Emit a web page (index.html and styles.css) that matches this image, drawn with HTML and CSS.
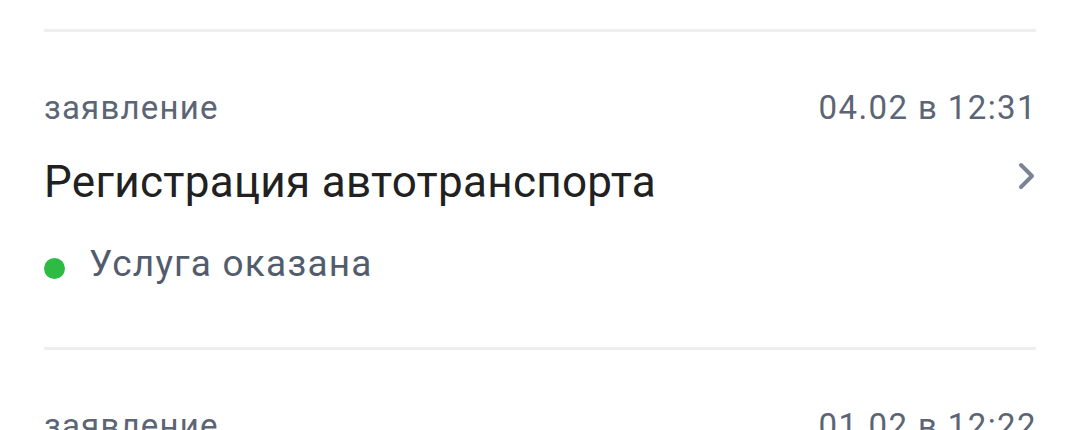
FILE: index.html
```html
<!DOCTYPE html>
<html lang="ru">
<head>
<meta charset="utf-8">
<link rel="stylesheet" href="styles.css">
</head>
<body>
<div class="list">
  <div class="divider"></div>
  <div class="item">
    <div class="meta">
      <span class="kind">заявление</span>
      <span class="date">04.02 в 12:31</span>
    </div>
    <div class="title-row">
      <span class="title">Регистрация автотранспорта</span>
      <svg class="chevron" width="20" height="30" viewBox="0 0 20 30"><polyline points="4,3 15,14 4,25" fill="none" stroke="#7b8496" stroke-width="4" stroke-linecap="round" stroke-linejoin="round"/></svg>
    </div>
    <div class="status">
      <span class="dot"></span>
      <span class="status-text">Услуга оказана</span>
    </div>
  </div>
  <div class="divider"></div>
  <div class="item">
    <div class="meta">
      <span class="kind">заявление</span>
      <span class="date">01.02 в 12:22</span>
    </div>
  </div>
</div>
</body>
</html>
```

FILE: styles.css
```css
html, body {
  margin: 0;
  padding: 0;
  background: #ffffff;
}
body {
  font-family: Roboto, "Noto Sans", sans-serif;
  overflow: hidden;
  height: 430px;
}
.list {
  padding: 29px 44px 0 44px;
  display: flex;
  flex-direction: column;
}
.divider {
  height: 3px;
  background: #eeeeee;
}
.item {
  display: flex;
  flex-direction: column;
  padding: 56px 0 61px 0;
}
.meta {
  display: flex;
  justify-content: space-between;
  align-items: baseline;
  font-size: 33px;
  line-height: 40px;
  color: #5b6576;
  letter-spacing: 1.2px;
}
.date {
  letter-spacing: 1.4px;
  margin-right: -1px;
}
.title-row {
  margin-top: 28px;
  display: flex;
  justify-content: space-between;
  align-items: center;
}
.title {
  font-size: 44px;
  line-height: 52px;
  color: #212121;
  letter-spacing: 0.3px;
}
.chevron {
  margin-bottom: 11px;
  margin-right: -1px;
}
.status {
  margin-top: 34px;
  display: flex;
  align-items: center;
  gap: 24px;
}
.dot {
  width: 21px;
  height: 21px;
  border-radius: 50%;
  background: #2dbb43;
  margin-top: 9px;
}
.status-text {
  font-size: 37px;
  line-height: 44px;
  color: #535c6c;
  letter-spacing: 1.2px;
}
```
